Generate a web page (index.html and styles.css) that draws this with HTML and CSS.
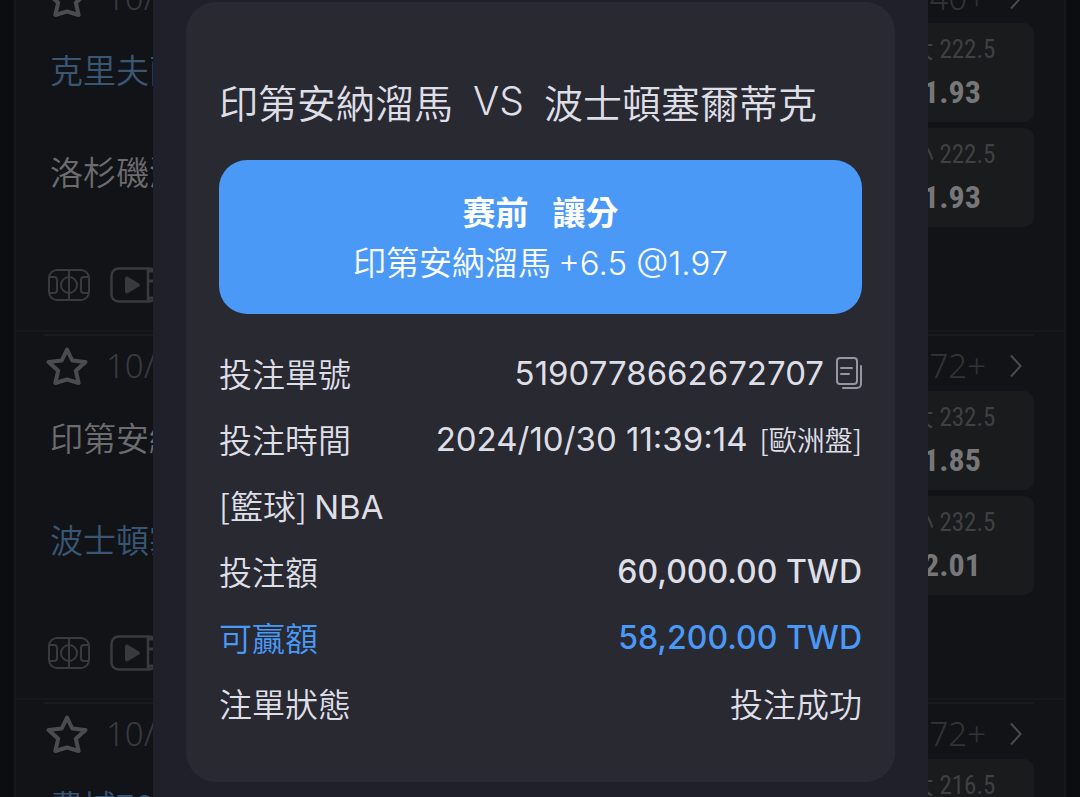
FILE: index.html
```html
<!DOCTYPE html>
<html lang="zh-Hant">
<head>
  <meta charset="UTF-8" />
  <meta name="viewport" content="width=device-width, initial-scale=1.0" />
  <title>投注單</title>
  <link rel="stylesheet" href="styles.css">
</head>
<body>
  <!-- Shared icons -->
  <svg class="sprite" aria-hidden="true">
    <symbol id="icon-star" viewBox="0 0 42 40">
      <path d="M21 3.500l5.200 11 13.300 1.500-9.700 8.700 2.900 12.300L21 33.500 9.300 37l2.900-12.300L2.500 16l13.300-1.500z" fill="none" stroke="currentColor" stroke-width="4" stroke-linejoin="round" />
    </symbol>
    <symbol id="icon-court" viewBox="0 0 42 32">
      <g fill="none" stroke="currentColor" stroke-width="2">
        <rect x="1" y="1" width="40" height="30" rx="8" />
        <path d="M21 1v30M1 8h5a3 3 0 0 1 3 3v10a3 3 0 0 1-3 3H1M41 8h-5a3 3 0 0 0-3 3v10a3 3 0 0 0 3 3h5" />
        <circle cx="21" cy="16" r="8" />
      </g>
    </symbol>
    <symbol id="icon-video" viewBox="0 0 48 36">
      <rect x="1.500" y="1.500" width="45" height="33" rx="7" fill="none" stroke="currentColor" stroke-width="2.500" />
      <path d="M38 2v32" fill="none" stroke="currentColor" stroke-width="2.500" />
      <path d="M38 4h8M38 14h8M38 31h8" fill="none" stroke="currentColor" stroke-width="3" />
      <path d="M15 11.500v13a2 2 0 0 0 3 1.600l11-6.500a2 2 0 0 0 0-3.200l-11-6.500a2 2 0 0 0-3 1.600z" fill="currentColor" />
    </symbol>
    <symbol id="icon-chevron" viewBox="0 0 12 24">
      <path d="M1 1.500L10.500 12 1 22.500" fill="none" stroke="currentColor" stroke-width="2" />
    </symbol>
  </svg>

  <main class="match-list">
    <section class="match">
      <header class="match-header">
        <button class="icon-btn" aria-label="收藏"><svg class="star"><use href="#icon-star" /></svg></button>
        <time class="match-date">10/30</time>
        <a href="#" class="more">40+ <svg class="chevron"><use href="#icon-chevron" /></svg></a>
      </header>
      <div class="match-body">
        <div class="teams">
          <p class="team highlight">克里夫蘭騎士</p>
          <p class="team">洛杉磯湖人</p>
          <div class="media">
            <svg class="court"><use href="#icon-court" /></svg>
            <svg class="video"><use href="#icon-video" /></svg>
          </div>
        </div>
        <div class="odds">
          <button class="odd"><span class="line">大 222.5</span><span class="price">1.93</span></button>
          <button class="odd"><span class="line">小 222.5</span><span class="price">1.93</span></button>
        </div>
      </div>
    </section>

    <section class="match">
      <header class="match-header">
        <button class="icon-btn" aria-label="收藏"><svg class="star"><use href="#icon-star" /></svg></button>
        <time class="match-date">10/31</time>
        <a href="#" class="more">72+ <svg class="chevron"><use href="#icon-chevron" /></svg></a>
      </header>
      <div class="match-body">
        <div class="teams">
          <p class="team">印第安納溜馬</p>
          <p class="team highlight">波士頓塞爾蒂克</p>
          <div class="media">
            <svg class="court"><use href="#icon-court" /></svg>
            <svg class="video"><use href="#icon-video" /></svg>
          </div>
        </div>
        <div class="odds">
          <button class="odd"><span class="line">大 232.5</span><span class="price">1.85</span></button>
          <button class="odd"><span class="line">小 232.5</span><span class="price">2.01</span></button>
        </div>
      </div>
    </section>

    <section class="match">
      <header class="match-header">
        <button class="icon-btn" aria-label="收藏"><svg class="star"><use href="#icon-star" /></svg></button>
        <time class="match-date">10/31</time>
        <a href="#" class="more">72+ <svg class="chevron"><use href="#icon-chevron" /></svg></a>
      </header>
      <div class="match-body">
        <div class="teams">
          <p class="team highlight">費城76人</p>
        </div>
        <div class="odds">
          <button class="odd"><span class="line">大 216.5</span></button>
        </div>
      </div>
    </section>
  </main>

  <div class="overlay">
    <div class="dialog" role="dialog" aria-labelledby="ticketTitle">
      <article class="ticket">
        <h2 class="ticket-title" id="ticketTitle"><span>印第安納溜馬</span><span class="vs">VS</span><span>波士頓塞爾蒂克</span></h2>

        <div class="pick">
          <p class="pick-type"><span>赛前</span><span>讓分</span></p>
          <p class="pick-detail">印第安納溜馬 <span class="num">+6.5 @1.97</span></p>
        </div>

        <dl class="details">
          <div class="row">
            <dt>投注單號</dt>
            <dd>
              <span class="num">5190778662672707</span>
              <button class="copy" aria-label="複製">
                <svg viewBox="0 0 26 32" fill="none" stroke="currentColor" stroke-width="2" stroke-linecap="round">
                  <rect x="1" y="1" width="20" height="26" rx="3" />
                  <path d="M5 11h11M5 17h8M25 9v18a4 4 0 0 1-4 4H7" />
                </svg>
              </button>
            </dd>
          </div>
          <div class="row">
            <dt>投注時間</dt>
            <dd><span class="num">2024/10/30 11:39:14</span> <span class="market">[歐洲盤]</span></dd>
          </div>
          <div class="row">
            <dt>[籃球] <span class="num">NBA</span></dt>
          </div>
          <div class="row">
            <dt>投注額</dt>
            <dd class="amount">60,000.00 TWD</dd>
          </div>
          <div class="row win">
            <dt>可贏額</dt>
            <dd class="amount">58,200.00 TWD</dd>
          </div>
          <div class="row">
            <dt>注單狀態</dt>
            <dd>投注成功</dd>
          </div>
        </dl>
      </article>
    </div>
  </div>
</body>
</html>
```
FILE: styles.css
```css
* {
  margin: 0;
  padding: 0;
  box-sizing: border-box;
}

body, html {
  height: 100%;
}

body {
  background: #0c0d11;
  color: #dedee6;
  font-family: "Noto Sans CJK TC", "Noto Sans", sans-serif;
  font-size: 33px;
  font-weight: 350;
  overflow: hidden;
}

button {
  background: none;
  border: none;
  color: inherit;
  font: inherit;
  cursor: pointer;
}

svg {
  display: block;
}

.sprite {
  display: none;
}

.num {
  font-family: Inter, sans-serif;
  font-size: 33px;
  line-height: 1;
}

/* Match list */
.match-list {
  margin: -36px 14px 0;
  border-left: 2px solid #17181c;
  border-right: 2px solid #17181c;
  background: #121317;
}

.match {
  height: 368px;
  padding: 2px 30px 0 28px;
  border-bottom: 2px solid #17181c;
}

.match-header {
  display: flex;
  align-items: center;
  gap: 18px;
  height: 57px;
  padding: 4px 12px 0 2px;
  border-top: 2px solid #1a1b1e;
  color: #3a3a3d;
  font-weight: 300;
}

.star {
  width: 42px;
  height: 40px;
  color: #4c4c4f;
}

.match-date,
.more {
  font-family: "Noto Sans", sans-serif;
}

.more {
  display: flex;
  align-items: center;
  gap: 24px;
  margin-left: auto;
  color: #333336;
  text-decoration: none;
}

.chevron {
  width: 12px;
  height: 24px;
  color: #4a4a4d;
}

.match-body {
  display: flex;
  justify-content: space-between;
}

.teams {
  padding: 22px 0 0 6px;
}

.team {
  height: 102px;
  line-height: 48px;
  color: #6c6c6f;
}

.team.highlight {
  color: #395675;
}

.media {
  display: flex;
  align-items: center;
  gap: 20px;
  margin: 18px 0 0 -2px;
  color: #3a3a3d;
}

.court {
  width: 42px;
  height: 32px;
}

.video {
  width: 48px;
  height: 36px;
}

.odds {
  display: flex;
  flex-direction: column;
  gap: 6px;
}

.odd {
  display: flex;
  flex-direction: column;
  align-items: center;
  width: 160px;
  height: 99px;
  padding: 6px 4px 0 0;
  border-radius: 10px;
  background: #1a1b1c;
  font-family: "Liberation Sans Narrow", "Roboto Condensed", Roboto, "Noto Sans CJK TC", sans-serif;
}

.line {
  font-size: 25px;
  line-height: 42px;
  font-weight: 400;
  color: #404042;
}

.price {
  font-size: 32px;
  line-height: 42px;
  font-weight: 700;
  color: #77777a;
}

/* Bet ticket dialog */
.overlay {
  position: fixed;
  inset: 0;
  padding: 0 152px 0 153px;
}

.dialog {
  min-height: 100%;
  padding: 2px 33px 15px;
  background: #20202a;
}

.ticket {
  padding: 70px 33px 46px;
  border-radius: 30px;
  background: #292931;
}

.ticket-title {
  display: flex;
  gap: 20px;
  font-size: 39px;
  font-weight: 350;
  line-height: 58px;
  white-space: nowrap;
}

.vs {
  font-family: Inter, sans-serif;
}

.pick {
  margin: 30px 0 26px;
  padding: 26px 0 28px;
  border-radius: 28px;
  background: #4a99f7;
  color: #fff;
  text-align: center;
  line-height: 50px;
}

.pick-type {
  display: flex;
  justify-content: center;
  gap: 24px;
  font-weight: 700;
}

.row {
  display: flex;
  align-items: center;
  justify-content: space-between;
  height: 66px;
  white-space: nowrap;
}

.row dd {
  display: flex;
  align-items: center;
  gap: 12px;
}

.row .num {
  font-weight: 400;
}

.copy svg {
  width: 26px;
  height: 32px;
  color: #9696a0;
}

.market {
  font-size: 28px;
}

.row .amount {
  font-family: Inter, sans-serif;
  font-size: 32px;
  font-weight: 500;
}

.win {
  color: #4a99f7;
}
```
